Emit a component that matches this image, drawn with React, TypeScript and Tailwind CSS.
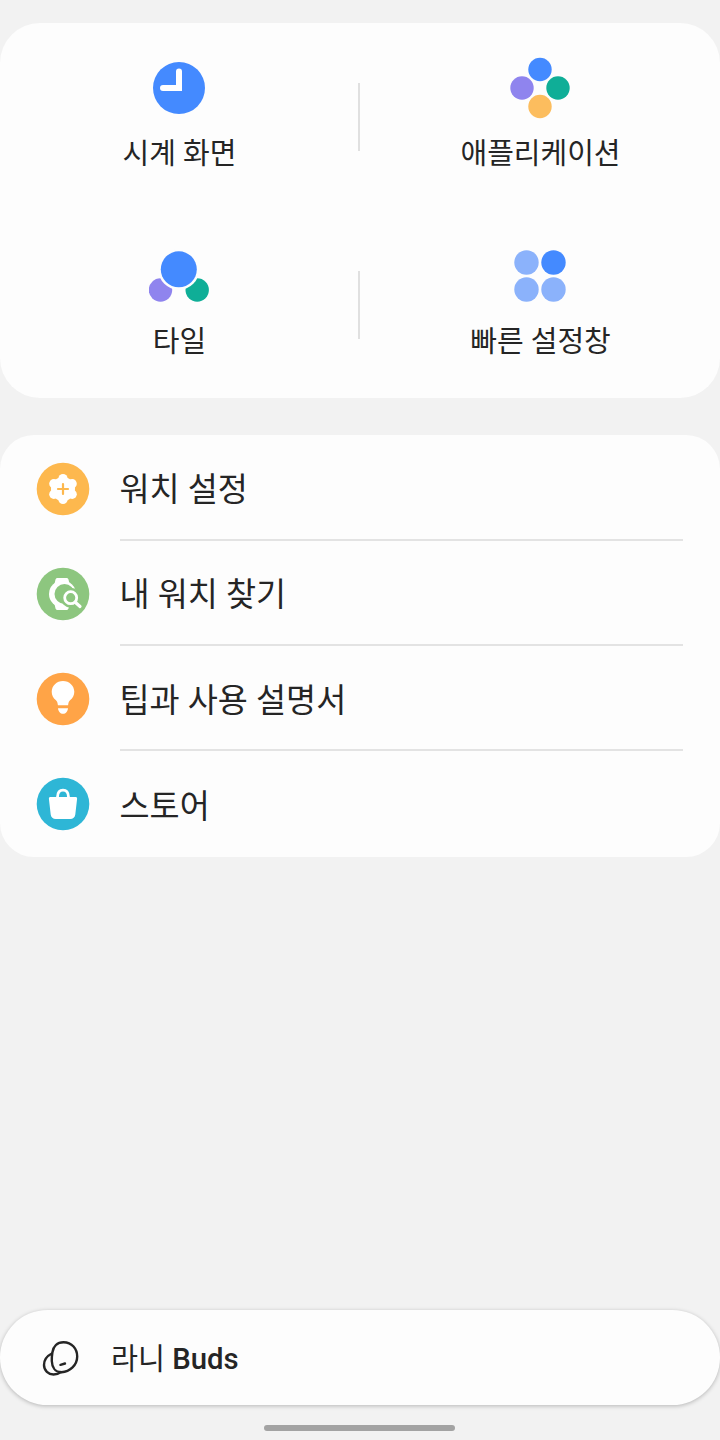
const sans = "font-['Roboto','Noto_Sans_CJK_KR',sans-serif]";

function ClockIcon() {
  return (
    <svg width="62" height="62" viewBox="0 0 62 62">
      <circle cx="30" cy="31" r="26" fill="#448aff" />
      <path d="M30 14.500V31H14" fill="none" stroke="#fff" strokeWidth="6" strokeLinecap="round" />
    </svg>
  );
}

function AppsIcon() {
  return (
    <svg width="62" height="62" viewBox="0 0 62 62">
      <circle cx="30" cy="12.500" r="11.700" fill="#448aff" />
      <circle cx="12" cy="31" r="11.700" fill="#8f84ee" />
      <circle cx="48" cy="31" r="11.700" fill="#0fae97" />
      <circle cx="30" cy="49.500" r="11.700" fill="#fcbd5e" />
    </svg>
  );
}

function TilesIcon() {
  return (
    <svg width="62" height="62" viewBox="0 0 62 62">
      <circle cx="11.500" cy="45" r="11.700" fill="#8f84ee" />
      <circle cx="48.200" cy="45" r="11.700" fill="#0fae97" />
      <circle cx="29.800" cy="24.300" r="20.500" fill="#fdfdfd" />
      <circle cx="29.800" cy="24.300" r="18" fill="#448aff" />
    </svg>
  );
}

function QuickIcon() {
  return (
    <svg width="62" height="62" viewBox="0 0 62 62">
      <circle cx="16.500" cy="17.500" r="12.200" fill="#8bb2fb" />
      <circle cx="43.500" cy="17.500" r="12.200" fill="#448aff" />
      <circle cx="16.500" cy="44.500" r="12.200" fill="#8bb2fb" />
      <circle cx="43.500" cy="44.500" r="12.200" fill="#8bb2fb" />
    </svg>
  );
}

function GearIcon() {
  return (
    <svg width="54" height="54" viewBox="0 0 54 54">
      <circle cx="27" cy="27" r="26.300" fill="#fdb84e" />
      <g fill="#fff">
        <circle cx="27" cy="27" r="12" />
        <circle cx="27" cy="16.500" r="4.600" />
        <circle cx="36.200" cy="21.700" r="4.600" />
        <circle cx="36.200" cy="32.300" r="4.600" />
        <circle cx="27" cy="37.500" r="4.600" />
        <circle cx="17.800" cy="32.300" r="4.600" />
        <circle cx="17.800" cy="21.700" r="4.600" />
      </g>
      <path d="M27 22v10M22 27h10" stroke="#fdb84e" strokeWidth="2.200" strokeLinecap="round" />
    </svg>
  );
}

function WatchFindIcon() {
  return (
    <svg width="54" height="54" viewBox="0 0 54 54">
      <circle cx="27" cy="27" r="26.300" fill="#8dc67f" />
      <path d="M21.500 11h9c1 0 1.700.6 2 1.500l1 4.500h-15l1-4.500c.3-.9 1-1.500 2-1.500zM18.500 37h15l-1 4.500c-.3.9-1 1.500-2 1.500h-9c-1 0-1.700-.6-2-1.500z" fill="#fff" />
      <circle cx="26.500" cy="27" r="13.500" fill="#fff" />
      <circle cx="28.500" cy="27" r="10" fill="#8dc67f" />
      <circle cx="34.700" cy="30.700" r="10" fill="#8dc67f" />
      <circle cx="34.700" cy="30.700" r="6" fill="none" stroke="#fff" strokeWidth="2.800" />
      <path d="M39.500 35.500l4.500 4" stroke="#fff" strokeWidth="3.200" strokeLinecap="round" />
    </svg>
  );
}

function BulbIcon() {
  return (
    <svg width="54" height="54" viewBox="0 0 54 54">
      <circle cx="27" cy="27" r="26.300" fill="#ffa447" />
      <path d="M27 9c-6.300 0-11.300 4.900-11.300 10.800 0 3.500 1.600 6.300 4 8.300 1.400 1.200 1.900 2.600 2.200 5.200h10.200c.3-2.600.8-4 2.200-5.200 2.400-2 4-4.800 4-8.300C38.300 13.900 33.300 9 27 9z" fill="#fff" />
      <path d="M22 36.200h10c-.4 3.200-2.300 5.600-5 5.600s-4.600-2.400-5-5.600z" fill="#fff" />
    </svg>
  );
}

function BagIcon() {
  return (
    <svg width="54" height="54" viewBox="0 0 54 54">
      <circle cx="27" cy="27" r="26.300" fill="#2eb6d6" />
      <path d="M14.500 20h25c1 0 1.700.7 1.600 1.700l-1.800 15.800c-.4 2.900-2.300 4.500-5 4.500H19.700c-2.700 0-4.600-1.600-5-4.500l-1.800-15.800c-.1-1 .6-1.700 1.600-1.700z" fill="#fff" />
      <path d="M21.500 20c.2-4.500 2.500-6.800 5.500-6.800s5.300 2.300 5.500 6.800" fill="none" stroke="#fff" strokeWidth="2.800" />
    </svg>
  );
}

function BudsIcon() {
  return (
    <svg width="38" height="36" viewBox="0 0 38 36" fill="none" stroke="#252525" strokeWidth="2.400" strokeLinecap="round">
      <path d="M9.800 13.500C5 16 2 20.500 2 25c0 5.500 4.500 9.500 9.500 9.500 3 0 5.500-1 7.500-2.500" />
      <path d="M21.500 2.200C30 2.200 35.200 9 35.200 16.500 35.200 25 28 32 19.500 32.200 13 32.300 10 27 9.800 21c-.1-5 .2-6 .7-9 .8-5.500 4.500-9.800 11-9.800z" />
      <path d="M18.500 24.800l4.500-1.300" />
    </svg>
  );
}

function Tile({ icon, label, divider }: { icon: React.ReactNode; label: string; divider?: boolean }) {
  return (
    <div className="relative flex h-[187px] flex-col items-center pt-[34px]">
      {icon}
      <span className="mt-[15px] text-[29px] leading-[40px] text-[#252525]">{label}</span>
      {divider && <div className="absolute -right-px top-[60px] h-[68px] w-[2px] bg-[#e0e0e0]" />}
    </div>
  );
}

function Row({ icon, label, last }: { icon: React.ReactNode; label: string; last?: boolean }) {
  return (
    <div className="flex h-[105.200px] items-center pl-9 pr-[37px]">
      <div className="mt-[1px] shrink-0">{icon}</div>
      <div className={`ml-[29.500px] flex h-full flex-1 items-center ${last ? "" : "border-b-2 border-[#e3e3e3]"}`}>
        <span className="mt-[6px] text-[32.700px] leading-[44px] text-[#252525]">{label}</span>
      </div>
    </div>
  );
}

export default function App() {
  return (
    <div className={`flex h-[1440px] w-[720px] flex-col overflow-hidden bg-[#f2f2f2] pt-[23px] ${sans}`}>
      <div className="grid h-[375px] grid-cols-[359px_1fr] gap-x-[2px] rounded-[40px] bg-[#fdfdfd]">
        <Tile icon={<ClockIcon />} label="시계 화면" divider />
        <Tile icon={<AppsIcon />} label="애플리케이션" />
        <Tile icon={<TilesIcon />} label="타일" divider />
        <Tile icon={<QuickIcon />} label="빠른 설정창" />
      </div>

      <div className="mt-[37px] h-[422px] rounded-[34px] bg-[#fdfdfd] pt-[0.600px]">
        <Row icon={<GearIcon />} label="워치 설정" />
        <Row icon={<WatchFindIcon />} label="내 워치 찾기" />
        <Row icon={<BulbIcon />} label="팁과 사용 설명서" />
        <Row icon={<BagIcon />} label="스토어" last />
      </div>

      <div className="mt-auto flex h-[95px] items-center rounded-[48px] bg-[#fdfdfd] pl-[42px] shadow-[0_1px_4px_rgba(0,0,0,0.25)]">
        <BudsIcon />
        <span className="ml-[31px] mt-[3px] text-[29.300px] font-medium leading-[40px] text-[#252525]">
          <span className="font-normal">라니</span> Buds
        </span>
      </div>

      <div className="mb-[9px] mt-[20px] flex justify-center pr-[2px]">
        <div className="h-[6px] w-[191px] rounded-full bg-[#a3a3a3]" />
      </div>
    </div>
  );
}
